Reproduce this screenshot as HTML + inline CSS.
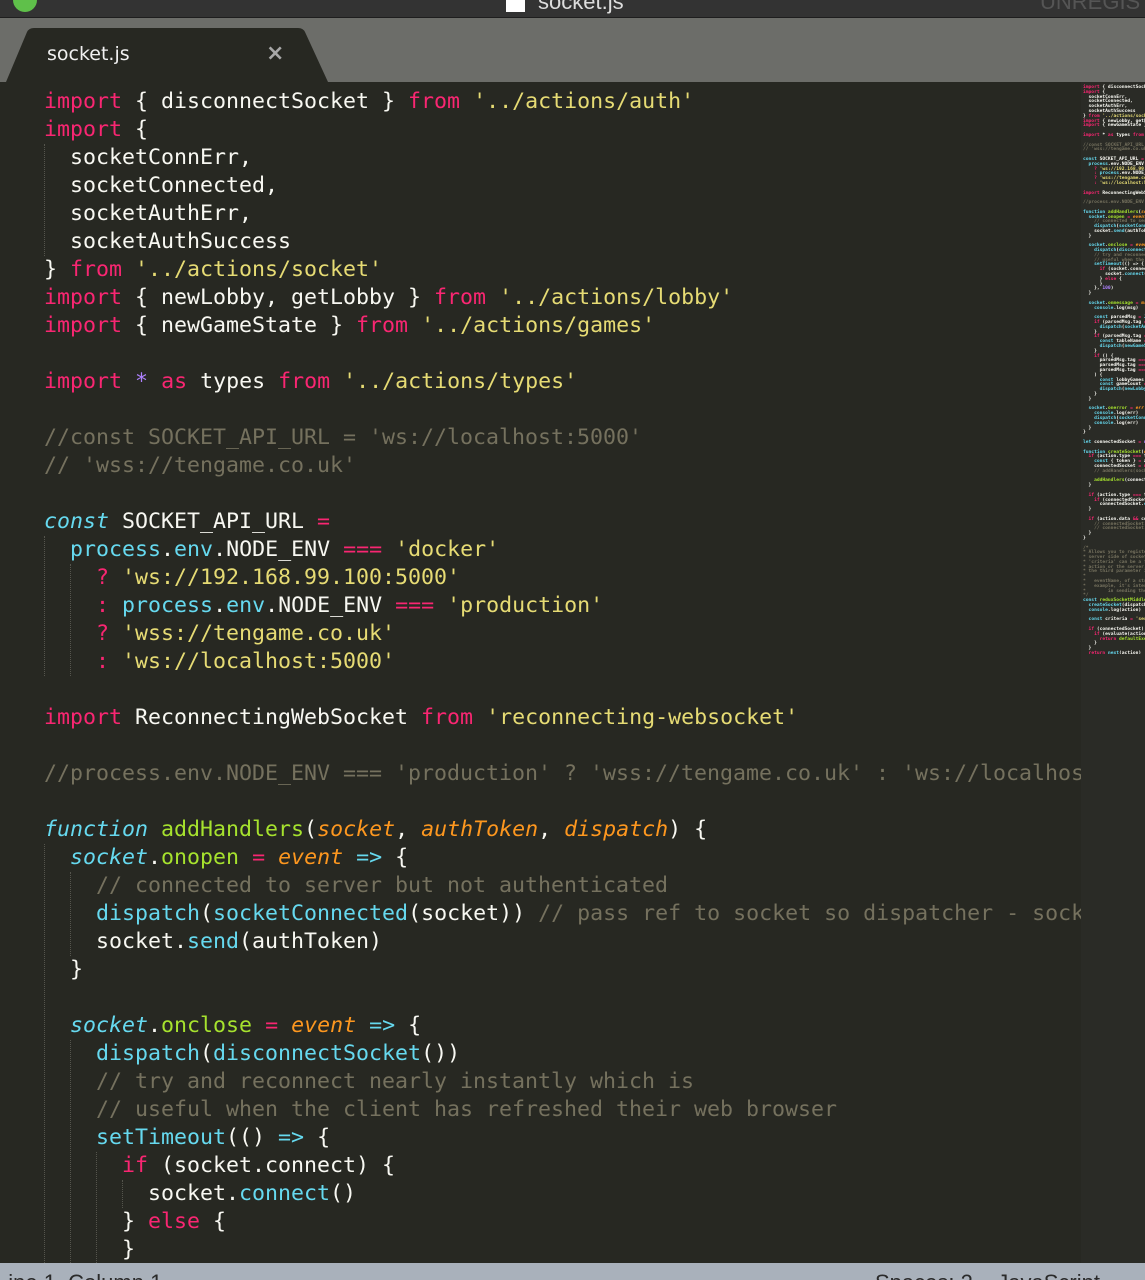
<!DOCTYPE html>
<html><head><meta charset="utf-8"><style>
*{margin:0;padding:0;box-sizing:border-box}
html,body{width:1145px;height:1280px;overflow:hidden;background:#272822}
#title{position:absolute;left:0;top:0;width:1145px;height:18px;background:#333333;border-bottom:1px solid #1e1e1e;overflow:hidden}
#tabs{position:absolute;left:0;top:18px;width:1145px;height:64px;background:#6c6d69}
#code{position:absolute;left:0;top:82px;width:1081px;height:1181px;overflow:hidden}
pre{font-family:"DejaVu Sans Mono","Liberation Mono",monospace;font-size:21.6px;line-height:28px;color:#f8f8f2;padding-left:44px;white-space:pre}
#code pre{padding-top:6px}
.k{color:#f92672}.s{color:#e6db74}.c{color:#75715e}.f{color:#a6e22e}.b{color:#66d9ef}.bi{color:#66d9ef;font-style:italic}.o{color:#fd971f;font-style:italic}.p{color:#ae81ff}
.g{position:absolute;width:0;border-left:1px dotted #55554d}
#mini{position:absolute;left:1081px;top:82px;width:64px;height:1181px;background:#2a2b26;overflow:hidden}
#mini pre{font-size:4.6px;line-height:4.8px;padding-left:2px;padding-top:4px;font-weight:bold}
#status{position:absolute;left:0;top:1263px;width:1145px;height:17px;background:#a9b1bb;overflow:hidden;font-family:"Liberation Sans",sans-serif;font-size:22px;color:#2a2a2a}
</style></head><body>
<div id="title">
<div style="position:absolute;left:13px;top:-12px;width:24px;height:24px;border-radius:50%;background:#5fc04a"></div>
<div style="position:absolute;left:506px;top:-4px;width:19px;height:16px;background:#fff"></div>
<div style="position:absolute;left:538px;top:-11px;font-family:'Liberation Sans',sans-serif;font-size:22px;color:#ddd">socket.js</div>
<div style="position:absolute;left:1040px;top:-11px;font-family:'Liberation Sans',sans-serif;font-size:22px;color:#555">UNREGISTERED</div>
</div>
<div id="tabs">
<svg width="340" height="64" style="position:absolute;left:0;top:0"><path d="M6 64 L27 14 Q29 10 34 10 L298 10 Q303 10 305 14 L328 64 Z" fill="#272822"/></svg>
<div style="position:absolute;left:47px;top:25px;font-family:'DejaVu Sans','Liberation Sans',sans-serif;font-size:19px;color:#f0f0f0">socket.js</div>
<div style="position:absolute;left:266px;top:23px;font-family:'DejaVu Sans',sans-serif;font-size:22px;color:#a8a8a8;font-weight:bold">×</div>
</div>
<div id="code">
<div class="g" style="left:44px;top:62px;height:112px"></div>
<div class="g" style="left:44px;top:454px;height:140px"></div>
<div class="g" style="left:70px;top:482px;height:112px"></div>
<div class="g" style="left:44px;top:762px;height:421px"></div>
<div class="g" style="left:70px;top:790px;height:84px"></div>
<div class="g" style="left:70px;top:958px;height:225px"></div>
<div class="g" style="left:96px;top:1070px;height:113px"></div>
<div class="g" style="left:122px;top:1098px;height:28px"></div>
<pre><span class="k">import</span> { disconnectSocket } <span class="k">from</span> <span class="s">'../actions/auth'</span>
<span class="k">import</span> {
  socketConnErr,
  socketConnected,
  socketAuthErr,
  socketAuthSuccess
} <span class="k">from</span> <span class="s">'../actions/socket'</span>
<span class="k">import</span> { newLobby, getLobby } <span class="k">from</span> <span class="s">'../actions/lobby'</span>
<span class="k">import</span> { newGameState } <span class="k">from</span> <span class="s">'../actions/games'</span>

<span class="k">import</span> <span class="p">*</span> <span class="k">as</span> types <span class="k">from</span> <span class="s">'../actions/types'</span>

<span class="c">//const SOCKET_API_URL = 'ws://localhost:5000'</span>
<span class="c">// 'wss://tengame.co.uk'</span>

<span class="bi">const</span> SOCKET_API_URL <span class="k">=</span>
  <span class="b">process</span>.<span class="b">env</span>.NODE_ENV <span class="k">===</span> <span class="s">'docker'</span>
    <span class="k">?</span> <span class="s">'ws://192.168.99.100:5000'</span>
    <span class="k">:</span> <span class="b">process</span>.<span class="b">env</span>.NODE_ENV <span class="k">===</span> <span class="s">'production'</span>
    <span class="k">?</span> <span class="s">'wss://tengame.co.uk'</span>
    <span class="k">:</span> <span class="s">'ws://localhost:5000'</span>

<span class="k">import</span> ReconnectingWebSocket <span class="k">from</span> <span class="s">'reconnecting-websocket'</span>

<span class="c">//process.env.NODE_ENV === 'production' ? 'wss://tengame.co.uk' : 'ws://localhost:5000'</span>

<span class="bi">function</span> <span class="f">addHandlers</span>(<span class="o">socket</span>, <span class="o">authToken</span>, <span class="o">dispatch</span>) {
  <span class="bi">socket</span>.<span class="f">onopen</span> <span class="k">=</span> <span class="o">event</span> <span class="b">=&gt;</span> {
    <span class="c">// connected to server but not authenticated</span>
    <span class="b">dispatch</span>(<span class="b">socketConnected</span>(socket)) <span class="c">// pass ref to socket so dispatcher - socket</span>
    socket.<span class="b">send</span>(authToken)
  }

  <span class="bi">socket</span>.<span class="f">onclose</span> <span class="k">=</span> <span class="o">event</span> <span class="b">=&gt;</span> {
    <span class="b">dispatch</span>(<span class="b">disconnectSocket</span>())
    <span class="c">// try and reconnect nearly instantly which is</span>
    <span class="c">// useful when the client has refreshed their web browser</span>
    <span class="b">setTimeout</span>(() <span class="b">=&gt;</span> {
      <span class="k">if</span> (socket.connect) {
        socket.<span class="b">connect</span>()
      } <span class="k">else</span> {
      }
</pre>
</div>
<div id="mini"><div style="height:572px;overflow:hidden"><pre><span class="k">import</span> { disconnectSocket } <span class="k">from</span> <span class="s">'../actions/auth'</span>
<span class="k">import</span> {
  socketConnErr,
  socketConnected,
  socketAuthErr,
  socketAuthSuccess
} <span class="k">from</span> <span class="s">'../actions/socket'</span>
<span class="k">import</span> { newLobby, getLobby } <span class="k">from</span> <span class="s">'../actions/lobby'</span>
<span class="k">import</span> { newGameState } <span class="k">from</span> <span class="s">'../actions/games'</span>

<span class="k">import</span> * <span class="k">as</span> types <span class="k">from</span> <span class="s">'../actions/types'</span>

<span class="c">//const SOCKET_API_URL = 'ws://localhost:5000'</span>
<span class="c">// 'wss://tengame.co.uk'</span>

<span class="b">const</span> SOCKET_API_URL <span class="k">=</span>
  <span class="b">process</span>.env.NODE_ENV <span class="k">===</span> <span class="s">'docker'</span>
    <span class="k">?</span> <span class="s">'ws://192.168.99.100:5000'</span>
    <span class="k">:</span> <span class="b">process</span>.env.NODE_ENV <span class="k">===</span> <span class="s">'production'</span>
    <span class="k">?</span> <span class="s">'wss://tengame.co.uk'</span>
    <span class="k">:</span> <span class="s">'ws://localhost:5000'</span>

<span class="k">import</span> ReconnectingWebSocket <span class="k">from</span> <span class="s">'reconnecting'</span>

<span class="c">//process.env.NODE_ENV === 'production' ?</span>

<span class="b">function</span> <span class="f">addHandlers</span>(<span class="o">socket</span>, <span class="o">authToken</span>, <span class="o">dispatch</span>) {
  <span class="b">socket</span>.<span class="f">onopen</span> <span class="k">=</span> <span class="o">event</span> =&gt; {
    <span class="c">// connected to server but not auth</span>
    <span class="b">dispatch</span>(<span class="b">socketConnected</span>(socket))
    socket.<span class="b">send</span>(authToken)
  }

  <span class="b">socket</span>.<span class="f">onclose</span> <span class="k">=</span> <span class="o">event</span> =&gt; {
    <span class="b">dispatch</span>(<span class="b">disconnectSocket</span>())
    <span class="c">// try and reconnect nearly instantly</span>
    <span class="c">// useful when the client has refreshed</span>
    <span class="b">setTimeout</span>(() =&gt; {
      <span class="k">if</span> (socket.connect) {
        socket.<span class="b">connect</span>()
      } <span class="k">else</span> {
      }
    }, <span class="p">100</span>)
  }

  <span class="b">socket</span>.<span class="f">onmessage</span> <span class="k">=</span> <span class="o">msg</span> =&gt; {
    <span class="b">console</span>.log(msg)

    <span class="b">const</span> parsedMsg <span class="k">=</span> <span class="b">JSON</span>.parse(msg.data)
    <span class="k">if</span> (parsedMsg.tag <span class="k">===</span> <span class="s">'AuthSuccess'</span>) {
      <span class="b">dispatch</span>(<span class="b">socketAuthSuccess</span>())
    }
    <span class="k">if</span> (parsedMsg.tag <span class="k">===</span> <span class="s">'GameState'</span>) {
      <span class="b">const</span> tableName <span class="k">=</span> parsedMsg.contents
      <span class="b">dispatch</span>(<span class="b">newGameState</span>(tableName))
    }
    <span class="k">if</span> () {
      parsedMsg.tag <span class="k">===</span> <span class="s">'NewGameList'</span> ||
      parsedMsg.tag <span class="k">===</span> <span class="s">'NewGameList'</span> ||
      parsedMsg.tag <span class="k">===</span> <span class="s">'NewGameList'</span>
    ) {
      <span class="b">const</span> lobbyGames <span class="k">=</span> parsedMsg.contents
      <span class="b">const</span> gameCount <span class="k">=</span> parsedMsg.count
      <span class="b">dispatch</span>(<span class="b">newLobby</span>(lobbyGames))
    }
  }

  <span class="b">socket</span>.<span class="f">onerror</span> <span class="k">=</span> <span class="o">err</span> =&gt; {
    <span class="b">console</span>.log(err)
    <span class="b">dispatch</span>(<span class="b">socketConnErr</span>(err))
    <span class="b">console</span>.log(err)
  }
}

<span class="b">let</span> connectedSocket <span class="k">=</span> <span class="p">null</span>

<span class="b">function</span> <span class="f">createSocket</span>(<span class="o">dispatch</span>, <span class="o">authToken</span>) {
  <span class="k">if</span> (action.type <span class="k">===</span> types.<span class="b">CONNECT</span>) {
    <span class="b">const</span> { token } <span class="k">=</span> action
    connectedSocket <span class="k">=</span> <span class="k">new</span> <span class="f">ReconnectingWebSocket</span>(url)
    <span class="c">// addHandlers(socket, token, dispatch)</span>

    <span class="f">addHandlers</span>(connectedSocket, token)
  }

  <span class="k">if</span> (action.type <span class="k">===</span> types.<span class="b">DISCONNECT</span>) {
    <span class="k">if</span> (connectedSocket.readyState <span class="k">===</span>
      connectedSocket.<span class="b">close</span>()
  }

  <span class="k">if</span> (action.data <span class="k">&amp;&amp;</span> connectedSocket) {
    <span class="c">// connectedSocket.send(action.data)</span>
    <span class="c">// connectedSocket.send(action.data)</span>
  }
}

<span class="c">/*</span>
<span class="c">* Allows you to register actions that</span>
<span class="c">* server side of socket</span>
<span class="c">* 'criteria' can be a function that</span>
<span class="c">* action or the server, array of a</span>
<span class="c">* the third parameter is an action</span>
<span class="c">*</span>
<span class="c">*   eventName, of a string name to</span>
<span class="c">*   example, it's internal schema</span>
<span class="c">*        in sending the message</span>
<span class="c">*/</span>
<span class="b">const</span> <span class="f">reduxSocketMiddleware</span> <span class="k">=</span> () =&gt;
  <span class="b">createSocket</span>(dispatch, action)
  <span class="b">console</span>.log(action)

  <span class="b">const</span> criteria <span class="k">=</span> <span class="s">'server/'</span>

  <span class="k">if</span> (connectedSocket) {
    <span class="k">if</span> (evaluate(action, criteria)) {
      <span class="k">return</span> <span class="f">defaultExecute</span>(dispatch)
    }
  }
  <span class="k">return</span> <span class="b">next</span>(action)
}

<span class="b">function</span> <span class="f">evaluate</span>(<span class="o">action</span>, <span class="o">option</span>) {
  <span class="k">if</span> (action <span class="k">&amp;&amp;</span> action.type) {
    <span class="k">return</span> <span class="p">false</span>
  }
</pre></div></div>
<div id="status"><div style="position:absolute;left:-4px;top:7px">Line 1, Column 1</div><div style="position:absolute;left:875px;top:7px">Spaces: 2&nbsp;&nbsp;&nbsp;&nbsp;JavaScript</div></div>
</body></html>
